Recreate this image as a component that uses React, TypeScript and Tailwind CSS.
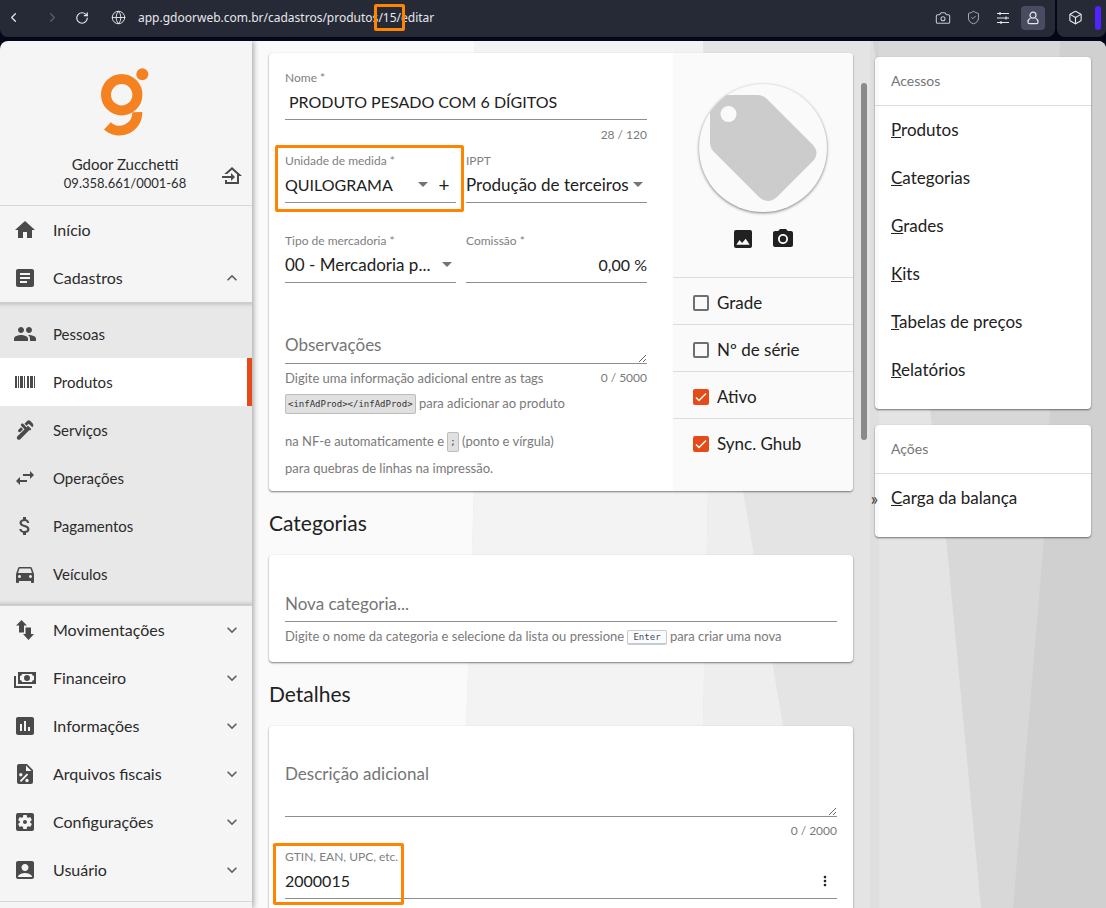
import React from "react";
import { Box, Camera, ChevronLeft, ChevronRight, Globe, RotateCw, ShieldCheck } from "lucide-react";
import {
  MdAccountBox, MdArticle, MdAttachMoney, MdDirectionsCar, MdExpandLess, MdExpandMore, MdHome,
  MdInsertChart, MdMoreVert, MdPeople, MdPhotoCamera, MdPlumbing, MdSettingsApplications, MdSwapHoriz,
} from "react-icons/md";

function Glyph({ d, className = "size-6" }: { d: string; className?: string }) {
  return (
    <svg viewBox="0 0 24 24" fill="currentColor" fillRule="evenodd" className={className} aria-hidden="true">
      <path d={d} />
    </svg>
  );
}

const BARCODE = "M2 6h2v12H2zM5 6h1v12H5zM7 6h3v12H7zM11 6h1v12h-1zM14 6h2v12h-2zM17 6h3v12h-3zM21 6h1v12h-1z";
const UP_DOWN = "M8.5 2 14 7.5h-3v7H6v-7H3zM12.5 9.5H18V16h3l-5.5 6-5.5-6h2.5z";
const CASH =
  "M5 6h18v12H5zM14 9a3 3 0 1 1 0 6 3 3 0 0 1 0-6M9 8a2 2 0 0 1-2 2v4a2 2 0 0 1 2 2h10a2 2 0 0 1 2-2v-4a2 2 0 0 1-2-2zM1 10h2v10h16v2H1z";
const FILE_PERCENT =
  "M14 2H6a2 2 0 0 0-2 2v16a2 2 0 0 0 2 2h12a2 2 0 0 0 2-2V8zM13 3.5 18.5 9H13zM7.8 11a1.7 1.7 0 1 1 0 3.4 1.7 1.7 0 0 1 0-3.4M13.8 11.5l1.4 1.2-7 7.3-1.4-1.2zM14 16.8a1.7 1.7 0 1 1 0 3.4 1.7 1.7 0 0 1 0-3.4";
const EXIT =
  "M15 13l-4 4v-3H2v-2h9V9zM5 20v-4h2v2h10v-7.81l-5-4.5L7.21 10H4.22L12 3l10 9h-3v8z";
const IMAGE =
  "M5 3h14a2 2 0 0 1 2 2v14a2 2 0 0 1-2 2H5a2 2 0 0 1-2-2V5a2 2 0 0 1 2-2zM5.3 17.7h13.4l-4-6-3.6 4.4-2.6-3z";

type Item = { label: string; icon: React.ReactNode; active?: boolean };

const registers: Item[] = [
  { label: "Pessoas", icon: <MdPeople /> },
  { label: "Produtos", icon: <Glyph d={BARCODE} />, active: true },
  { label: "Serviços", icon: <MdPlumbing /> },
  { label: "Operações", icon: <MdSwapHoriz /> },
  { label: "Pagamentos", icon: <MdAttachMoney /> },
  { label: "Veículos", icon: <MdDirectionsCar /> },
];

const groups: Item[] = [
  { label: "Movimentações", icon: <Glyph d={UP_DOWN} /> },
  { label: "Financeiro", icon: <Glyph d={CASH} /> },
  { label: "Informações", icon: <MdInsertChart /> },
  { label: "Arquivos fiscais", icon: <Glyph d={FILE_PERCENT} /> },
  { label: "Configurações", icon: <MdSettingsApplications /> },
  { label: "Usuário", icon: <MdAccountBox /> },
];

function MenuIcon({ children }: { children: React.ReactNode }) {
  return <span className="flex w-10 text-2xl text-[#4a4a4a]">{children}</span>;
}

function BrowserBar() {
  return (
    <header className="flex h-[41px] shrink-0 gap-[2px] bg-[#04061a] pb-1 text-[#e6e7ea]">
      <div className="flex flex-1 items-center rounded-b-lg bg-[#262a36] pb-[2px] pr-2.5">
        <button aria-label="Voltar" className="ml-1 p-0.5"><ChevronLeft size={15} strokeWidth={2} /></button>
        <button aria-label="Avançar" className="ml-5 p-0.5 text-[#5b5f6c]"><ChevronRight size={15} strokeWidth={2} /></button>
        <button aria-label="Recarregar" className="ml-[11px] p-0.5"><RotateCw size={14} strokeWidth={2} /></button>
        <Globe size={15} strokeWidth={1.5} className="ml-5 mr-3" />
        <span className="flex-1 whitespace-nowrap font-['Noto_Sans',sans-serif] text-[12px] leading-5">
          app.gdoorweb.com.br/cadastros/produtos
          <span className="relative">
            /15/
            <span className="absolute -inset-x-[4px] -inset-y-[5px] rounded-[2px] border-[3px] border-[#ff8500]" />
          </span>
          editar
        </span>
        <div className="flex items-center gap-1.5">
          <button aria-label="Capturar" className="flex w-6 justify-center text-[#c4c6cc]"><Camera size={16} strokeWidth={1.6} /></button>
          <button aria-label="Proteção" className="flex w-6 justify-center text-[#a9abb4]"><ShieldCheck size={15} strokeWidth={1.6} /></button>
          <button aria-label="Ajustes" className="flex w-6 justify-center">
            <svg viewBox="0 0 14 14" className="size-3.5" stroke="currentColor" strokeWidth="1.2" aria-hidden="true">
              <path d="M1 2.5h12M1 7h12M1 11.5h12M4 1v3M10 5.5v3M5 10v3" />
            </svg>
          </button>
          <button aria-label="Perfil" className="flex size-6 items-center justify-center rounded bg-[#484c60]">
            <svg viewBox="0 0 14 14" className="size-3.5" fill="none" stroke="currentColor" strokeWidth="1.2" aria-hidden="true">
              <circle cx="7" cy="4.2" r="3" />
              <path d="M4.5 7C2.800 8 2 9.500 2 11.200c0 1 .6 1.500 1.500 1.500h7c.9 0 1.500-.5 1.500-1.500 0-1.700-.8-3.200-2.500-4.200" />
            </svg>
          </button>
        </div>
      </div>
      <div className="flex items-center gap-[11px] rounded-b-lg bg-[#262a36] pb-[2px] pl-2.5 pr-[5px]">
        <button aria-label="Extensões" className="p-px"><Box size={15} strokeWidth={1.8} /></button>
        <span className="h-6 w-1.5 rounded-full bg-[#4f24ff]" />
      </div>
    </header>
  );
}

function Backdrop() {
  return (
    <svg viewBox="252 41 854 867" preserveAspectRatio="none" className="absolute inset-0 size-full" aria-hidden="true">
      <path fill="#e4e4e4" d="M252 41h854v867H252z" />
      <path fill="#fafafa" d="M252 41h222v450l-14 417H252z" />
      <path fill="#f3f3f3" d="M474 41h229l5 450-9 417H460l14-417z" />
      <path fill="#eeeeee" d="M704 270 743 491l40 235 32 182H699l9-417z" />
      <path fill="#d8d8d8" d="M873 41h187v867h-79l-35-371-16-128z" />
      <path fill="#d0d0d0" d="M1060 41h46v867h-93l31-371 6-128z" />
    </svg>
  );
}

function Sidebar() {
  return (
    <aside className="z-10 flex w-[252px] shrink-0 flex-col overflow-hidden bg-[#f5f5f5] text-[16px] text-[#2b2b2b] shadow-[1px_0_6px_rgba(0,0,0,0.4)]">
      <div className="relative flex flex-col items-center border-b border-[#d8d8d8] pb-[13px] pr-0.5 pt-[25px]">
        <svg viewBox="0 0 50 72" className="h-[72px] w-[50px]" fill="none" stroke="#f58220" strokeWidth="10" role="img" aria-label="Gdoor">
          <circle cx="21.700" cy="28.700" r="15.700" />
          <circle cx="42.300" cy="8.300" r="6" fill="#f58220" stroke="none" />
          <path d="M37.300 46.200A17.800 17.800 0 0 1 7.400 59.800" />
        </svg>
        <p className="mt-4 text-[15px] leading-5">Gdoor Zucchetti</p>
        <p className="text-[13px] leading-[18px]">09.358.661/0001-68</p>
        <button aria-label="Trocar empresa" className="absolute bottom-[17px] right-2 text-[#4a4a4a]"><Glyph d={EXIT} /></button>
      </div>
      <nav>
        <a href="#inicio" className="flex h-12 items-center pl-[13px]"><MenuIcon><MdHome /></MenuIcon>Início</a>
        <button className="flex h-12 w-full items-center pl-[13px] pr-2.5">
          <MenuIcon><MdArticle /></MenuIcon>Cadastros<MdExpandLess className="ml-auto size-5 text-[#5f5f5f]" />
        </button>
        <div className="border-y border-[#cfcfcf] bg-[#e8e8e8] py-[7px] shadow-[inset_0_5px_4px_-4px_rgba(0,0,0,0.2),inset_0_-5px_4px_-4px_rgba(0,0,0,0.2)]">
          {registers.map((r) => (
            <a
              key={r.label}
              href={"#" + r.label}
              className={r.active ? "flex h-12 items-center border-r-[5px] border-[#e64a19] bg-white pl-[13px]" : "flex h-12 items-center pl-[13px]"}
            >
              <MenuIcon>{r.icon}</MenuIcon>
              <span className="text-[15px]">{r.label}</span>
            </a>
          ))}
        </div>
        <div className="border-b border-[#d8d8d8] pb-[7px]">
          {groups.map((g) => (
            <button key={g.label} className="flex h-12 w-full items-center pl-[13px] pr-2.5">
              <MenuIcon>{g.icon}</MenuIcon>{g.label}<MdExpandMore className="ml-auto size-5 text-[#5f5f5f]" />
            </button>
          ))}
        </div>
      </nav>
    </aside>
  );
}

function Caret() {
  return (
    <svg viewBox="0 0 10 5" className="h-[5px] w-2.5 shrink-0 fill-[#757575]" aria-hidden="true"><path d="M0 0h10L5 5z" /></svg>
  );
}

function Field({ id, label, children }: { id: string; label: string; children: React.ReactNode }) {
  return (
    <div className="min-w-0">
      <label htmlFor={id} className="block whitespace-nowrap text-[12px] leading-[18px] text-[#808080]">{label}</label>
      <div className="flex h-[33px] items-center border-b border-[#8e8e8e] pb-[3px]">{children}</div>
    </div>
  );
}

const card = "rounded bg-white shadow-[0_1px_2px_rgba(0,0,0,0.5)]";
const control = "min-w-0 flex-1 appearance-none bg-transparent outline-none";
const hint = "text-[13px] text-[#7a7a7a]";
const counter = "text-right text-[12px] leading-4 text-[#7a7a7a]";
const frame = "pointer-events-none absolute rounded-[2px] border-[3px] border-[#ff8500]";
const code = "rounded-[2px] border border-[#bdbdbd] bg-[#e0e0e0] px-[2px] py-1 align-[1px] font-['DejaVu_Sans_Mono',monospace] text-[9px] text-[#333]";

function Flag({ id, label, checked = false }: { id: string; label: string; checked?: boolean }) {
  return (
    <div className="flex h-[47px] items-center gap-2 border-t border-[#dcdcdc] pl-5 pt-[3px]">
      <span className="relative flex size-4">
        <input id={id} type="checkbox" defaultChecked={checked} className="peer size-4 appearance-none rounded-[2px] border-2 border-[#6f6f6f] checked:border-[#e64a19] checked:bg-[#e64a19]" />
        <svg viewBox="0 0 16 16" className="pointer-events-none absolute inset-0 hidden size-4 peer-checked:block" fill="none" stroke="#fff" strokeWidth="1.500" aria-hidden="true">
          <path d="m3 8.500 3 3 7-7" />
        </svg>
      </span>
      <label htmlFor={id}>{label}</label>
    </div>
  );
}

function ProductCard() {
  return (
    <section className={"flex overflow-hidden " + card}>
      <div className="min-w-0 flex-1 pb-[9px] pl-4 pr-[26px] pt-4">
        <Field id="nome" label="Nome *">
          <input id="nome" defaultValue="PRODUTO PESADO COM 6 DÍGITOS" className={"pl-1 text-[16px] " + control} />
        </Field>
        <p className={"mt-[7px] " + counter}>28 / 120</p>
        <div className="mt-[9px] grid grid-cols-[171fr_181fr] gap-x-2.5 gap-y-[29px]">
          <div className="relative min-w-0">
            <Field id="unidade" label="Unidade de medida *">
              <select id="unidade" className={"text-[16px] " + control}><option>QUILOGRAMA</option></select>
              <Caret />
              <button aria-label="Adicionar unidade" className="ml-2.5 mr-1.5 w-3 text-[19px] leading-none">+</button>
            </Field>
            <span className={"-bottom-[9px] -left-[10px] -right-[8px] -top-[7px] " + frame} />
          </div>
          <Field id="ippt" label="IPPT">
            <select id="ippt" className={control}><option>Produção de terceiros</option></select>
            <span className="mr-1"><Caret /></span>
          </Field>
          <Field id="tipo" label="Tipo de mercadoria *">
            <select id="tipo" className={control}><option>00 - Mercadoria p...</option></select>
            <span className="mr-1"><Caret /></span>
          </Field>
          <Field id="comissao" label="Comissão *">
            <input id="comissao" defaultValue="0,00 %" className={"text-right text-[16px] " + control} />
          </Field>
        </div>
        <textarea aria-label="Observações" placeholder="Observações" rows={1} className="mt-11 block h-[37px] w-full resize-y border-b border-[#8e8e8e] pt-1.5 leading-6 outline-none placeholder:text-[#757575]" />
        <div className={"mt-1.5 " + hint}>
          <p className="flex justify-between leading-4"><span>Digite uma informação adicional entre as tags</span><span className={counter}>0 / 5000</span></p>
          <p className="mt-1 h-[27px] leading-[27px]"><code className={code}>{"<infAdProd></infAdProd>"}</code> para adicionar ao produto</p>
          <p className="mt-[11px] h-[27px] leading-[27px]">na NF-e automaticamente e <code className={code}>;</code> (ponto e vírgula)</p>
          <p className="h-[27px] leading-[27px]">para quebras de linhas na impressão.</p>
        </div>
      </div>
      <div className="w-[180px] shrink-0 bg-[#fafafa]">
        <div className="flex flex-col items-center pb-[26px] pt-[31px]">
          <svg viewBox="0 0 128 128" className="size-32 rounded-full shadow-[0_1px_3px_rgba(0,0,0,0.5)]" role="img" aria-label="Imagem do produto">
            <path fill="#ccc" fillRule="evenodd" d="M11 11h48q5 0 9 4l45 45q9 9 0 18l-35 35q-9 8-18 0L15 68q-4-4-4-9zM29.500 22a8 8 0 1 0 0 16 8 8 0 0 0 0-16z" />
          </svg>
          <div className="mt-[15px] flex gap-4 text-2xl text-[#212121]">
            <button aria-label="Escolher imagem"><Glyph d={IMAGE} /></button>
            <button aria-label="Tirar foto"><MdPhotoCamera /></button>
          </div>
        </div>
        <Flag id="grade" label="Grade" />
        <Flag id="serie" label="Nº de série" />
        <Flag id="ativo" label="Ativo" checked />
        <Flag id="sync" label="Sync. Ghub" checked />
      </div>
    </section>
  );
}

function LinkCard({ title, links }: { title: string; links: string[] }) {
  return (
    <section className={card}>
      <h3 className="border-b border-[#dcdcdc] px-4 text-[14px] leading-[48px] text-[#757575]">{title}</h3>
      <ul className="pb-[15px]">
        {links.map((l) => (
          <li key={l} className="h-12 px-4 leading-[47px]"><a href={"#" + l}><u>{l[0]}</u>{l.slice(1)}</a></li>
        ))}
      </ul>
    </section>
  );
}

export default function App() {
  return (
    <div className="flex h-screen flex-col overflow-hidden bg-[#04061a] font-[Lato,'Noto_Sans',sans-serif] text-[17px] text-[#212121]">
      <BrowserBar />
      <div className="flex min-h-0 flex-1 overflow-hidden rounded-t-lg">
        <Sidebar />
        <div className="relative flex min-w-0 flex-1">
          <Backdrop />
          <main className="relative min-w-0 flex-1 overflow-hidden pl-[17px] pr-[17px] pt-3">
            <ProductCard />
            <h2 className="text-[21px] leading-[64px]">Categorias</h2>
            <section className={"px-4 pb-4 pt-8 " + card}>
              <input aria-label="Nova categoria" placeholder="Nova categoria..." className="block h-[35px] w-full border-b border-[#8e8e8e] pb-0.5 outline-none placeholder:text-[#757575]" />
              <p className={"mt-1 h-5 leading-5 " + hint}>
                Digite o nome da categoria e selecione da lista ou pressione{" "}
                <kbd className="rounded-[2px] border border-b-2 border-[#c6cbd1] bg-[#fafbfc] px-[5px] py-px align-[1px] font-['DejaVu_Sans_Mono',monospace] text-[9px] text-[#444d56]">Enter</kbd>{" "}
                para criar uma nova
              </p>
            </section>
            <h2 className="text-[21px] leading-[64px]">Detalhes</h2>
            <section className={"px-4 pb-10 pt-8 " + card}>
              <textarea aria-label="Descrição adicional" placeholder="Descrição adicional" className="block h-[59px] w-full resize-y border-b border-[#8e8e8e] pt-1 leading-6 outline-none placeholder:text-[#757575]" />
              <p className={"mt-1.5 " + counter}>0 / 2000</p>
              <div className="relative mt-[9px]">
                <Field id="gtin" label="GTIN, EAN, UPC, etc.">
                  <input id="gtin" defaultValue="2000015" className={"text-[16px] " + control} />
                  <button aria-label="Mais opções" className="mr-1"><MdMoreVert className="size-4" /></button>
                </Field>
                <span className={"-bottom-[6px] -left-3 -top-[5px] w-[131px] " + frame} />
              </div>
            </section>
            <span className="absolute right-[3px] top-[42px] h-[357px] w-1.5 rounded-full bg-[#8a8a8a]" />
          </main>
          <aside className="relative flex w-[236px] shrink-0 flex-col gap-4 pl-[5px] pr-[15px] pt-4">
            <LinkCard title="Acessos" links={["Produtos", "Categorias", "Grades", "Kits", "Tabelas de preços", "Relatórios"]} />
            <LinkCard title="Ações" links={["Carga da balança"]} />
            <button aria-label="Recolher painel" className="absolute inset-y-0 left-0 flex w-[9px] items-center justify-center bg-black/[0.02] pt-12 text-[17px] text-[#333]">»</button>
          </aside>
        </div>
      </div>
    </div>
  );
}
